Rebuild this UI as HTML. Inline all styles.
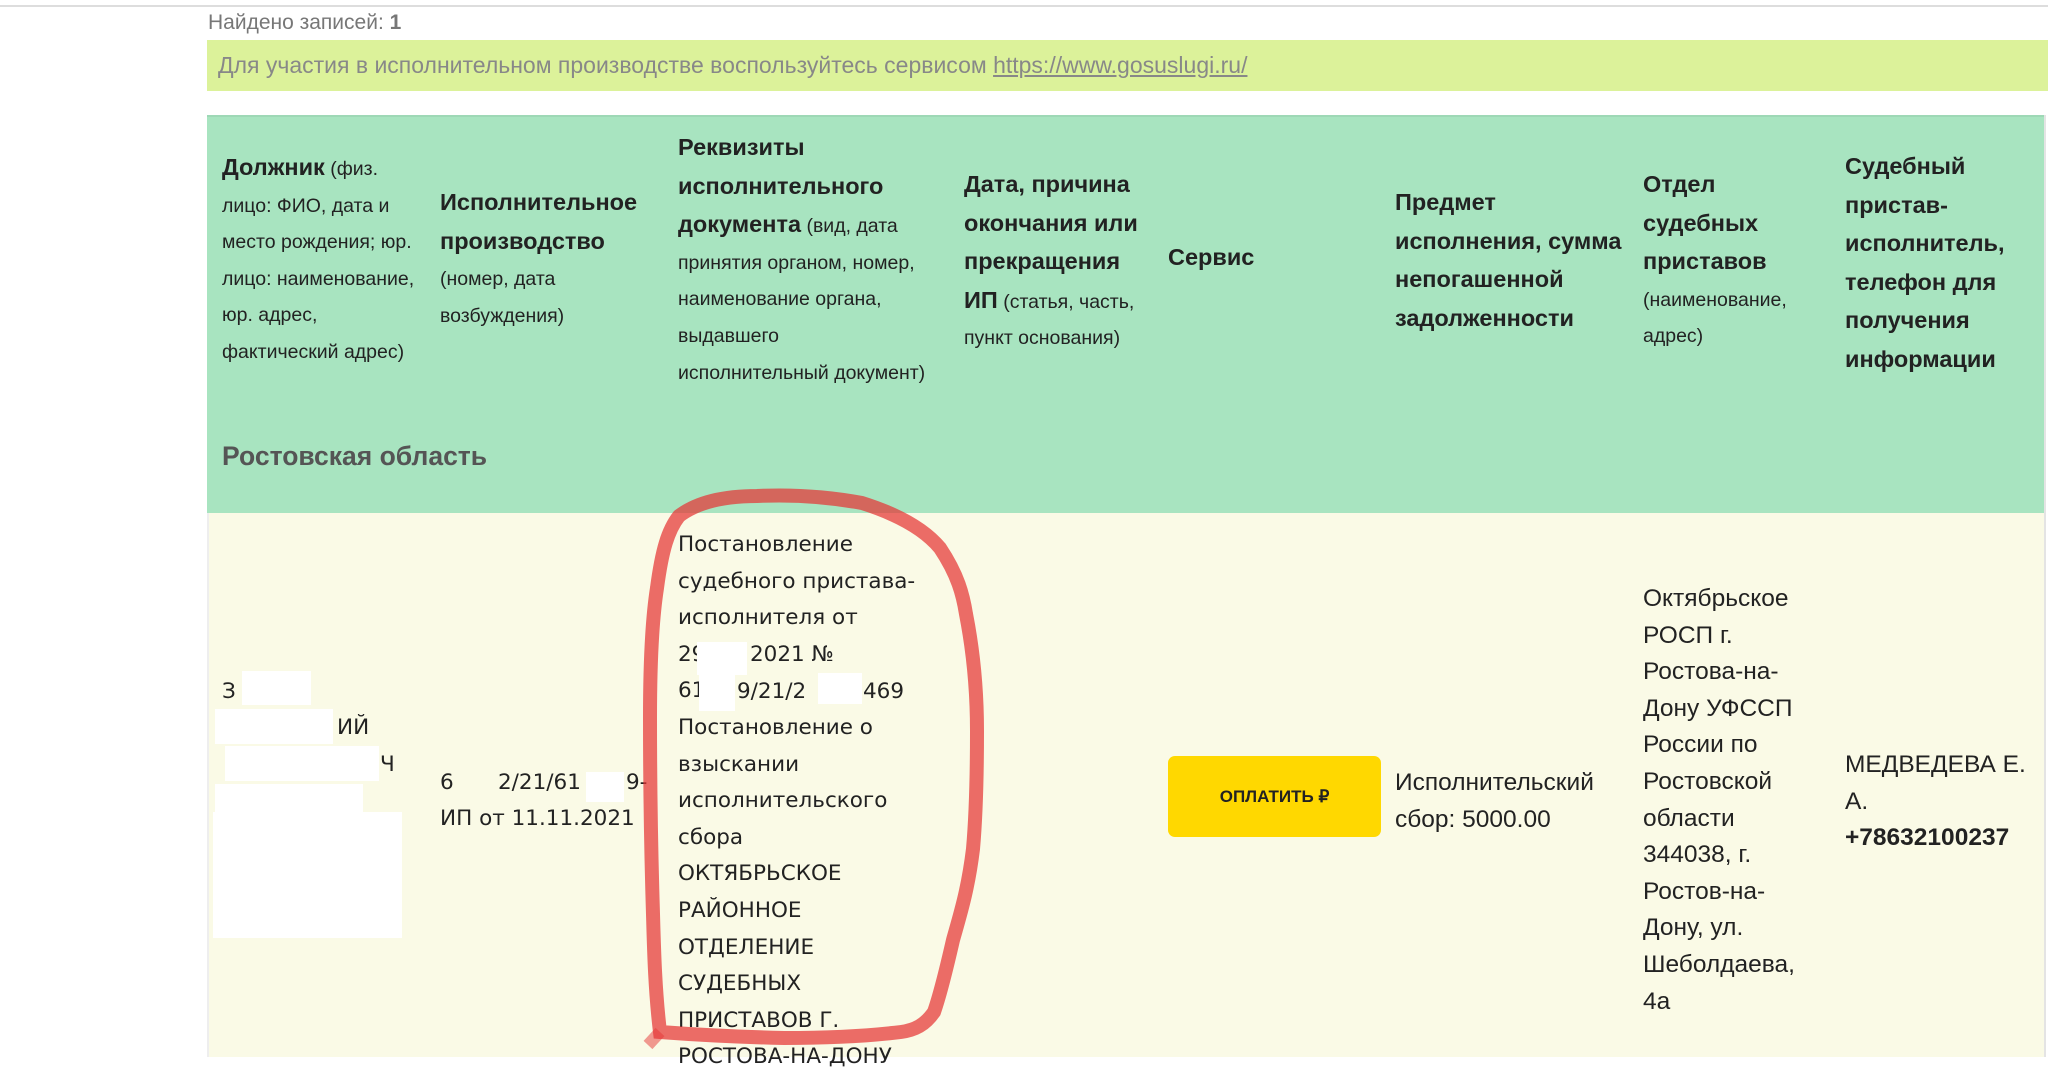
<!DOCTYPE html>
<html><head><meta charset="utf-8"><style>
body{margin:0;width:2048px;height:1057px;overflow:hidden;background:#fff;position:relative;font-family:"Liberation Sans",sans-serif;}
.a{position:absolute;}
.h{position:absolute;font-family:"Liberation Sans Narrow","Liberation Sans",sans-serif;font-size:19.5px;line-height:36.6px;color:#222;white-space:nowrap;}
.h b{font-size:23.5px;}
.t{position:absolute;font-family:"DejaVu Sans",sans-serif;font-size:21.5px;line-height:36.6px;color:#222;white-space:nowrap;}
.n{font-family:"Liberation Sans Narrow","Liberation Sans",sans-serif;font-size:24.5px;}
.w{position:absolute;background:#fff;}
</style></head><body>
<div class="a" style="left:0;top:5px;width:2048px;height:2px;background:#ddd"></div>
<div class="a" style="left:208px;top:11px;font-size:21px;color:#777;font-family:'Liberation Sans Narrow','Liberation Sans',sans-serif">Найдено записей: <b>1</b></div>
<div class="a" style="left:207px;top:40px;width:1841px;height:51px;background:#dcf29a"></div>
<div class="a" style="left:218px;top:52px;font-size:23px;color:#888;font-family:'Liberation Sans Narrow','Liberation Sans',sans-serif">Для участия в исполнительном производстве воспользуйтесь сервисом <u>https://www.gosuslugi.ru/</u></div>
<div class="a" style="left:207px;top:115px;width:1837px;height:398px;background:#a8e4c0;border-top:2px solid #9ed8b6"></div>
<div class="a" style="left:207px;top:513px;width:1837px;height:544px;background:#fafae6;border-left:2px solid #eee"></div>
<div class="a" style="left:2044px;top:115px;width:2px;height:942px;background:#e4e4e4"></div>

<div class="h" style="left:222px;top:149px"><b>Должник</b> (физ.<br>лицо: ФИО, дата и<br>место рождения; юр.<br>лицо: наименование,<br>юр. адрес,<br>фактический адрес)</div>
<div class="h" style="left:440px;top:184px"><b>Исполнительное</b><br><b>производство</b><br>(номер, дата<br>возбуждения)</div>
<div class="h" style="left:678px;top:129px"><b>Реквизиты</b><br><b>исполнительного</b><br><b>документа</b> (вид, дата<br>принятия органом, номер,<br>наименование органа,<br>выдавшего<br>исполнительный документ)</div>
<div class="h" style="left:964px;top:166px"><b>Дата, причина</b><br><b>окончания или</b><br><b>прекращения</b><br><b>ИП</b> (статья, часть,<br>пункт основания)</div>
<div class="h" style="left:1168px;top:239px"><b>Сервис</b></div>
<div class="h" style="left:1395px;top:184px"><b>Предмет</b><br><b>исполнения, сумма</b><br><b>непогашенной</b><br><b>задолженности</b></div>
<div class="h" style="left:1643px;top:166px"><b>Отдел</b><br><b>судебных</b><br><b>приставов</b><br>(наименование,<br>адрес)</div>
<div class="h" style="left:1845px;top:148px"><b>Судебный</b><br><b>пристав-</b><br><b>исполнитель,</b><br><b>телефон для</b><br><b>получения</b><br><b>информации</b></div>
<div class="h" style="left:222px;top:438px;color:#555"><b style="font-size:26.5px">Ростовская область</b></div>

<div class="t" style="left:222px;top:674px">З</div>
<div class="t" style="left:337px;top:710px">ИЙ</div>
<div class="t" style="left:380px;top:747px">Ч</div>
<div class="w" style="left:242px;top:671px;width:69px;height:34px"></div>
<div class="w" style="left:215px;top:709px;width:118px;height:35px"></div>
<div class="w" style="left:225px;top:746px;width:154px;height:35px"></div>
<div class="w" style="left:215px;top:784px;width:148px;height:32px"></div>
<div class="w" style="left:213px;top:812px;width:189px;height:126px"></div>

<div class="t" style="left:440px;top:765px">6</div>
<div class="t" style="left:498px;top:765px">2/21/61</div>
<div class="w" style="left:586px;top:772px;width:38px;height:30px"></div>
<div class="t" style="left:626px;top:765px">9-</div>
<div class="t" style="left:440px;top:801px">ИП от 11.11.2021</div>

<div class="t" style="left:678px;top:527px">Постановление<br>судебного пристава-<br>исполнителя от<br>29<br>61<br>Постановление о<br>взыскании<br>исполнительского<br>сбора<br>ОКТЯБРЬСКОЕ<br>РАЙОННОЕ<br>ОТДЕЛЕНИЕ<br>СУДЕБНЫХ<br>ПРИСТАВОВ Г.<br>РОСТОВА-НА-ДОНУ</div>
<div class="t" style="left:750px;top:637px">2021 №</div>
<div class="t" style="left:737px;top:674px">9/21/2</div>
<div class="t" style="left:863px;top:674px">469</div>
<div class="w" style="left:697px;top:642px;width:50px;height:33px"></div>
<div class="w" style="left:699px;top:675px;width:36px;height:36px"></div>
<div class="w" style="left:818px;top:673px;width:44px;height:31px"></div>

<div class="a" style="left:1168px;top:756px;width:213px;height:81px;background:#ffd800;border-radius:7px;text-align:center;line-height:81px;font-weight:bold;font-size:17px;color:#222;font-family:'Liberation Sans Narrow','Liberation Sans',sans-serif">ОПЛАТИТЬ ₽</div>
<div class="t n" style="left:1395px;top:765px">Исполнительский<br>сбор: 5000.00</div>
<div class="t n" style="left:1643px;top:581px">Октябрьское<br>РОСП г.<br>Ростова-на-<br>Дону УФССП<br>России по<br>Ростовской<br>области<br>344038, г.<br>Ростов-на-<br>Дону, ул.<br>Шеболдаева,<br>4а</div>
<div class="t n" style="left:1845px;top:747px">МЕДВЕДЕВА Е.<br>А.<br><b>+78632100237</b></div>

<svg class="a" style="left:0;top:0" width="2048" height="1057"><path d="M679,516 C700,500 730,496 757,496 C800,494 835,498 862,503 C900,515 925,530 940,548 C958,575 963,595 966,614 C975,660 977,700 977,731 C977,780 976,815 973,849 C968,890 960,915 953,940 C945,975 940,995 934,1012 C925,1025 915,1030 901,1032 C860,1037 820,1038 784,1038 C740,1037 700,1035 660,1032 C655,990 654,950 653,914 C651,850 650,780 650,718 C650,660 652,620 657,588 C662,550 668,530 679,516" fill="none" stroke="#e53535" stroke-width="14" stroke-opacity="0.72" stroke-linecap="round"/><path d="M660,1032 L648,1045" stroke="#e53535" stroke-width="12" stroke-opacity="0.5"/></svg>
</body></html>
